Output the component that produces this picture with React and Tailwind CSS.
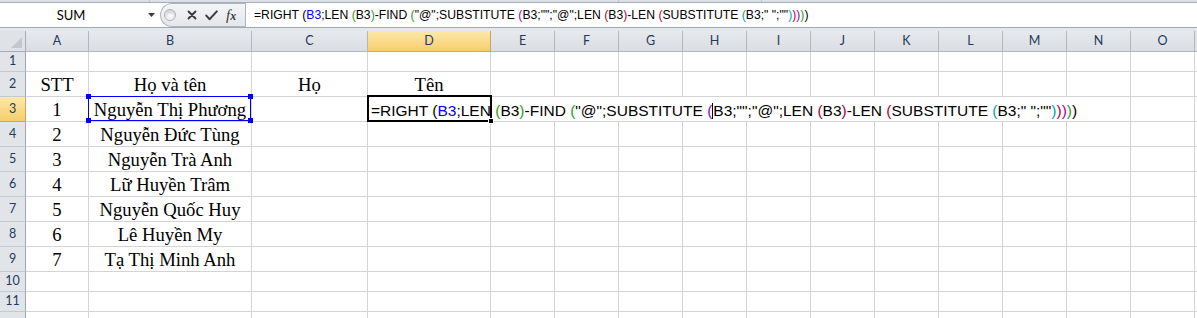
const HEAD = "font-['Lato',sans-serif] text-[12.5px] text-[#243b5a]";
const SERIF = "font-['Liberation_Serif',serif] text-[18.67px] leading-none text-black";

const cols = [
  { key: 'A', w: 'w-[63px]' },
  { key: 'B', w: 'w-[163px]' },
  { key: 'C', w: 'w-[116px]' },
  { key: 'D', w: 'w-[123px]' },
  { key: 'E', w: 'w-[64px]' },
  { key: 'F', w: 'w-[64px]' },
  { key: 'G', w: 'w-[64px]' },
  { key: 'H', w: 'w-[64px]' },
  { key: 'I', w: 'w-[64px]' },
  { key: 'J', w: 'w-[64px]' },
  { key: 'K', w: 'w-[64px]' },
  { key: 'L', w: 'w-[64px]' },
  { key: 'M', w: 'w-[64px]' },
  { key: 'N', w: 'w-[64px]' },
  { key: 'O', w: 'w-[64px]' },
];

const rows = [
  { n: 1, tall: false, cells: {} },
  { n: 2, tall: true, cells: { A: 'STT', B: 'Họ và tên', C: 'Họ', D: 'Tên' } },
  { n: 3, tall: true, cells: { A: '1', B: 'Nguyễn Thị Phương' } },
  { n: 4, tall: true, cells: { A: '2', B: 'Nguyễn Đức Tùng' } },
  { n: 5, tall: true, cells: { A: '3', B: 'Nguyễn Trà Anh' } },
  { n: 6, tall: true, cells: { A: '4', B: 'Lữ Huyền Trâm' } },
  { n: 7, tall: true, cells: { A: '5', B: 'Nguyễn Quốc Huy' } },
  { n: 8, tall: true, cells: { A: '6', B: 'Lê Huyền My' } },
  { n: 9, tall: true, cells: { A: '7', B: 'Tạ Thị Minh Anh' } },
  { n: 10, tall: false, cells: {} },
  { n: 11, tall: false, cells: {} },
  { n: 12, tall: false, cells: {}, hidden: true },
];

// paren colours by nesting level, like Excel does
const K = 'text-black';
const BLUE = 'text-[#0000ff]';
const GRN = 'text-[#2f9a20]';
const PUR = 'text-[#a100b8]';
const MAR = 'text-[#b0003a]';
const TEAL = 'text-[#00a3b0]';

const formula = [
  ['=RIGHT (', K],
  ['B3', BLUE],
  [';LEN ', K],
  ['(', GRN],
  ['B3', K],
  [')', GRN],
  ['-FIND ', K],
  ['(', GRN],
  ['"@";SUBSTITUTE ', K],
  ['(', PUR],
  ['caret', K],
  ['B3;"";"@";LEN ', K],
  ['(', MAR],
  ['B3', K],
  [')', MAR],
  ['-LEN ', K],
  ['(', MAR],
  ['SUBSTITUTE ', K],
  ['(', TEAL],
  ['B3;" ";""', K],
  [')', TEAL],
  [')', MAR],
  [')', PUR],
  [')', GRN],
  [')', K],
];

function Formula({ caret }) {
  return (
    <span className="shrink-0 whitespace-pre">
      {formula.map(([t, c], i) =>
        t === 'caret' ? (
          caret ? <span key={i} className="inline-block w-px h-[16px] bg-black align-[-3px]" /> : null
        ) : (
          <span key={i} className={c}>
            {t}
          </span>
        )
      )}
    </span>
  );
}

function FormulaBar() {
  return (
    <div className="flex h-[24px] bg-white">
      {/* Name box */}
      <div className="w-[142px] flex items-center justify-center pt-[1px] font-['Lato',sans-serif] text-[13px] text-black">
        SUM
      </div>
      <div className="w-[18px] flex items-center justify-center">
        <svg width="7" height="4" viewBox="0 0 7 4">
          <path d="M0 0h7L3.5 4z" fill="#3c3c3c" />
        </svg>
      </div>
      {/* cancel / enter / fx */}
      <div className="w-[85px] flex items-center rounded-l-full border border-r-0 border-[#aeb5bf] bg-gradient-to-b from-[#f4f5f7] to-[#e4e7eb]">
        <div className="ml-[3px] w-[12px] h-[12px] rounded-full border border-[#a9afb7] bg-gradient-to-b from-[#d3d6db] to-[#f5f6f7] flex items-center justify-center">
          <div className="w-[5px] h-[3px] rounded-full bg-white/80" />
        </div>
        <svg className="ml-[11px]" width="10" height="10" viewBox="0 0 10 10">
          <path d="M1.5 1.5l7 7M8.5 1.5l-7 7" stroke="#3a3a3a" strokeWidth="1.9" strokeLinecap="round" />
        </svg>
        <svg className="ml-[8px]" width="13" height="11" viewBox="0 0 13 11">
          <path d="M1.3 5.6l3.4 3.6L11.8 1.4" fill="none" stroke="#3a3a3a" strokeWidth="2" strokeLinecap="round" strokeLinejoin="round" />
        </svg>
        <span className="ml-[8px] font-['Liberation_Serif',serif] italic text-[15px] leading-none text-[#3a3a3a]">
          f<span className="text-[12px] font-bold">x</span>
        </span>
      </div>
      <div className="w-px bg-[#aeb5bf]" />
      <div className="flex-1 flex items-center pl-[8px] pt-[1px] overflow-hidden font-['Liberation_Sans',sans-serif] text-[12.2px]">
        <Formula caret={false} />
      </div>
    </div>
  );
}

function ColHeader() {
  return (
    <div className="flex h-[21px]">
      <div className="w-[26px] shrink-0 border-r border-b border-[#a4abb5] bg-[#dfe3e8] flex items-end justify-end p-[3px]">
        <svg width="11" height="11" viewBox="0 0 11 11">
          <path d="M11 0v11H0z" fill="#c3c8ce" />
        </svg>
      </div>
      {cols.map((c) =>
        c.key === 'D' ? (
          <div
            key={c.key}
            className={`${c.w} shrink-0 border-r border-b border-r-[#c9a45c] border-b-[#e0a63a] bg-gradient-to-b from-[#fde9a8] to-[#f7cd6c] flex items-center justify-center ${HEAD}`}
          >
            {c.key}
          </div>
        ) : (
          <div
            key={c.key}
            className={`${c.w} shrink-0 border-r border-b border-[#b1b7bf] bg-gradient-to-b from-[#e6e9ed] to-[#dadee4] flex items-center justify-center ${HEAD}`}
          >
            {c.key}
          </div>
        )
      )}
      <div className="flex-1 border-b border-[#b1b7bf] bg-[#dfe3e8]" />
    </div>
  );
}

function Row({ row }) {
  const h = row.tall ? 'h-[25px]' : 'h-[20px]';
  const active = row.n === 3;
  return (
    <div className={`flex ${h}`}>
      {active ? (
        <div className={`w-[26px] shrink-0 border-r border-b border-r-[#c9a45c] border-b-[#e0a63a] bg-gradient-to-b from-[#fde9a8] to-[#f7cd6c] flex items-center justify-center ${HEAD}`}>
          {row.n}
        </div>
      ) : (
        <div className={`w-[26px] shrink-0 border-r border-b border-r-[#9ea6b0] border-b-[#c5cad0] bg-[#e1e4e9] flex items-center justify-center ${HEAD}`}>
          {row.hidden ? '' : row.n}
        </div>
      )}
      {cols.map((c) => {
        if (active && c.key === 'B') {
          return (
            <div key={c.key} className={`${c.w} shrink-0 relative border-r border-b border-[#d4d4d4] flex items-end justify-center pb-[1px] ${SERIF}`}>
              {row.cells.B}
              <div className="absolute -left-[1px] -top-[1px] right-0 bottom-0 border border-[#0000ee]" />
              <div className="absolute -left-[3px] -top-[3px] w-[5px] h-[5px] bg-[#0000ee]" />
              <div className="absolute -right-[2px] -top-[3px] w-[5px] h-[5px] bg-[#0000ee]" />
              <div className="absolute -left-[3px] -bottom-[2px] w-[5px] h-[5px] bg-[#0000ee]" />
              <div className="absolute -right-[2px] -bottom-[2px] w-[5px] h-[5px] bg-[#0000ee]" />
            </div>
          );
        }
        if (active && c.key === 'D') {
          return (
            <div key={c.key} className={`${c.w} shrink-0 relative border-r border-b border-[#d4d4d4] flex items-end pl-[3px] pb-[2px] font-['Liberation_Sans',sans-serif] text-[15.5px] leading-none`}>
              <Formula caret />
              <div className="absolute -left-[1px] -top-[2px] -right-[2px] -bottom-[1px] border-2 border-black" />
              <div className="absolute -right-[4px] -bottom-[3px] w-[6px] h-[6px] bg-black border border-white" />
            </div>
          );
        }
        if (active && 'EFGHIJKLM'.includes(c.key)) {
          return <div key={c.key} className={`${c.w} shrink-0 border-b border-[#d4d4d4]`} />;
        }
        const v = row.cells[c.key];
        return (
          <div key={c.key} className={`${c.w} shrink-0 border-r border-b border-[#d4d4d4] flex items-end justify-center pb-[1px] ${SERIF}`}>
            {v}
          </div>
        );
      })}
      <div className="flex-1 border-b border-[#d4d4d4]" />
    </div>
  );
}

export default function App() {
  return (
    <div className="w-[1197px] h-[318px] overflow-hidden bg-white">
      <div className="h-[3px] bg-[#dde1e7] border-b border-[#a5adb8] flex">
        <div className="w-[150px] border-r border-[#c2c7ce]" />
        <div className="w-[469px] border-r border-[#c2c7ce]" />
        <div className="w-[143px] border-r border-[#c2c7ce]" />
      </div>
      <FormulaBar />
      <div className="h-[4px] bg-[#e4e7eb] border-t border-[#a1a9b3]" />
      <ColHeader />
      {rows.map((r) => (
        <Row key={r.n} row={r} />
      ))}
    </div>
  );
}
